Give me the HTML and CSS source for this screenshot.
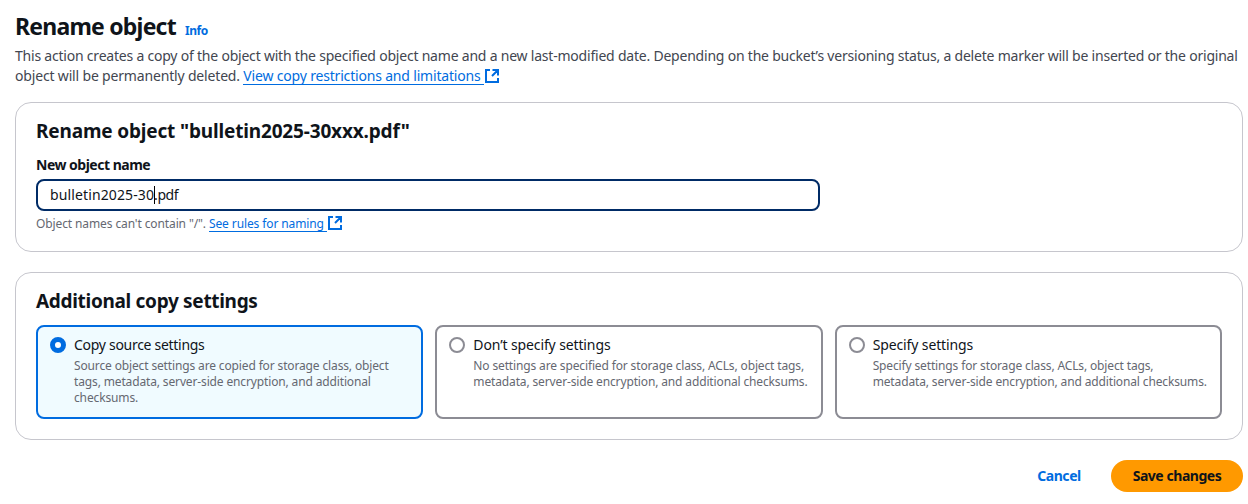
FILE: index.html
```html
<!DOCTYPE html>
<html lang="en">
<head>
<meta charset="utf-8">
<title>Rename object</title>
<link rel="stylesheet" href="styles.css">
</head>
<body>
<main class="page">
  <header class="page-header">
    <div class="title-row"><h1 class="title">Rename object</h1><a class="info">Info</a></div>
    <p class="description"><span class="line-one">This action creates a copy of the object with the specified object name and a new last-modified date. Depending on the bucket’s versioning status, a delete marker will be inserted or the original</span><br><span class="line-two">object will be permanently deleted. </span><a class="link link-copy">View copy restrictions and limitations</a><svg class="external" viewBox="0 0 16 16"><path d="M14 10v4H2V2h4M8.5 2H14v5.5M8 8l5.5-5.5"/></svg></p>
  </header>

  <section class="card card-rename">
    <h2 class="card-title name-title">Rename object "bulletin2025-30xxx.pdf"</h2>
    <div class="label"><span>New object name</span></div>
    <div class="input"><span class="before">bulletin2025-30</span><i class="caret"></i><span class="after">.pdf</span></div>
    <div class="hint"><span class="hint-text">Object names can't contain "/". </span><a class="link link-rules">See rules for naming</a><svg class="external" viewBox="0 0 16 16"><path d="M14 10v4H2V2h4M8.5 2H14v5.5M8 8l5.5-5.5"/></svg></div>
  </section>

  <section class="card card-settings">
    <h2 class="card-title settings-title">Additional copy settings</h2>
    <div class="tiles">
      <div class="tile selected">
        <i class="radio"></i>
        <div class="tile-body"><div class="tile-label">Copy source settings</div><div class="tile-text">Source object settings are copied for storage class, object<br>tags, metadata, server-side encryption, and additional<br>checksums.</div></div>
      </div>
      <div class="tile">
        <i class="radio"></i>
        <div class="tile-body"><div class="tile-label">Don’t specify settings</div><div class="tile-text">No settings are specified for storage class, ACLs, object tags,<br>metadata, server-side encryption, and additional checksums.</div></div>
      </div>
      <div class="tile">
        <i class="radio"></i>
        <div class="tile-body"><div class="tile-label">Specify settings</div><div class="tile-text">Specify settings for storage class, ACLs, object tags,<br>metadata, server-side encryption, and additional checksums.</div></div>
      </div>
    </div>
  </section>

  <footer class="actions"><button class="button cancel">Cancel</button><button class="button save">Save changes</button></footer>
</main>
</body>
</html>
```
FILE: styles.css
```css
* { box-sizing: border-box; }
body { margin: 0; background: #fff; color: #0f141a; font: 14px/20px "Noto Sans", "Open Sans", sans-serif; white-space: nowrap; }
h1, h2, p { margin: 0; }
.page { width: 1248px; height: 504px; padding: 11px 5px 0 15px; overflow: hidden; }
.page-header { height: 91px; }
.title-row { display: flex; align-items: baseline; gap: 9px; height: 35px; }
.title { font-size: 23px; line-height: 30px; font-weight: 700; letter-spacing: -0.78px; }
.info { font-size: 12px; line-height: 16px; font-weight: 700; letter-spacing: -0.4px; color: #006ce0; }
.description { color: #424650; letter-spacing: -0.213px; }
.line-two { letter-spacing: -0.17px; }
.link-copy { letter-spacing: -0.18px; }
.description span, .hint-text { white-space: pre; }
.link { display: inline-block; color: #006ce0; border-bottom: 1px solid #006ce0; padding-right: 3px; }
.link-copy { height: 19px; line-height: 20px; }
.link-rules { height: 16px; line-height: 16px; }
.external { width: 16px; height: 16px; vertical-align: -3px; fill: none; stroke: #006ce0; stroke-width: 2; }
.card { border: 1px solid #c6c6cd; border-radius: 16px; padding: 16px 20px 0; }
.card-rename { height: 150px; margin-bottom: 20px; }
.card-settings { height: 168px; margin-bottom: 20px; }
.card-title { font-size: 19px; line-height: 24px; font-weight: 700; }
.name-title { letter-spacing: -0.16px; }
.settings-title { letter-spacing: -0.31px; }
.label { margin-top: 12px; font-weight: 700; line-height: 20px; letter-spacing: -0.5px; }
.input { display: flex; align-items: center; width: 784px; height: 32px; margin-top: 4px; padding: 0 12px; border: 2px solid #002b66; border-radius: 8px; }
.before { letter-spacing: 0.12px; }
.after { letter-spacing: -0.4px; }
.caret { width: 1px; height: 18px; margin-right: -1px; background: #000; }
.hint { margin-top: 4px; font-size: 12px; line-height: 16px; letter-spacing: -0.11px; color: #656871; }
.tiles { display: grid; grid-template-columns: repeat(3, minmax(0, 1fr)); gap: 12px; margin-top: 12px; }
.tile { display: flex; gap: 8px; height: 94px; padding: 8px 12px; border: 2px solid #8c8c94; border-radius: 8px; }
.selected { border-color: #006ce0; background: #f0fbff; }
.radio { flex: none; width: 16px; height: 16px; margin-top: 2px; border: 2px solid #8c8c94; border-radius: 50%; background: #fff; }
.selected .radio { border: 5px solid #006ce0; }
.tile-label { letter-spacing: -0.12px; }
.selected .tile-label { letter-spacing: -0.29px; }
.tile-text { margin-top: 3px; font-size: 12px; line-height: 16px; letter-spacing: -0.14px; color: #656871; }
.actions { display: flex; justify-content: flex-end; }
.button { width: 132px; height: 32px; padding: 0; border: 0; border-radius: 20px; background: none; font: 700 14px/20px "Noto Sans", "Open Sans", sans-serif; letter-spacing: -0.45px; color: #0f141a; }
.cancel { width: 84px; margin-right: 10px; color: #006ce0; }
.save { background: #ff9900; }
```
